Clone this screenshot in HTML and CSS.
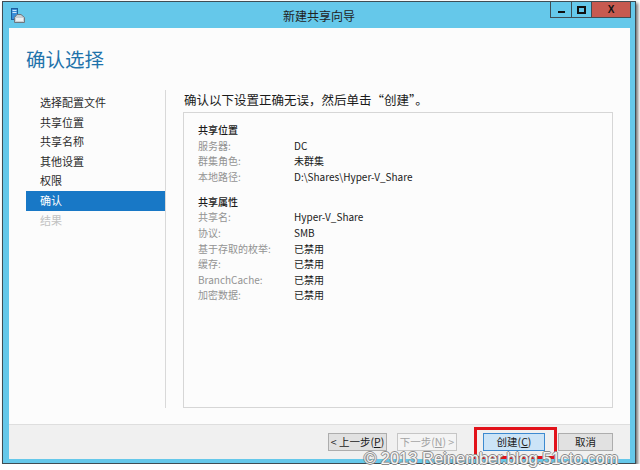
FILE: index.html
```html
<!DOCTYPE html>
<html lang="zh-CN">
<head>
    <meta charset="UTF-8">
    <title>新建共享向导</title>
    <link rel="stylesheet" href="styles.css">
</head>
<body>
    <div class="window">
        <div class="titlebar">
            <svg class="app-icon" width="14" height="15" viewBox="0 0 14 15">
                <rect x="0.5" y="0.5" width="6" height="11" fill="#3a8fd8" stroke="#1f5f9c"/>
                <rect x="1.5" y="2" width="4" height="1" fill="#cfe8ff"/>
                <rect x="1.5" y="4" width="4" height="1" fill="#cfe8ff"/>
                <path d="M3.5 9.5 L6 6.5 H10 L13.5 9.5 V14.5 H3.5 Z" fill="#c9cfd4" stroke="#6d7880"/>
                <rect x="5" y="10" width="7" height="3" fill="#eef1f3"/>
            </svg>
            <div class="title">新建共享向导</div>
            <div class="caption-buttons">
                <span class="cap-btn cap-min"><i></i></span>
                <span class="cap-btn cap-max"><i></i></span>
                <span class="cap-btn cap-close">X</span>
            </div>
        </div>
        <div class="client">
            <div class="main">
                <h1 class="page-title">确认选择</h1>
                <div class="wizard-body">
                    <ul class="steps">
                        <li>选择配置文件</li>
                        <li>共享位置</li>
                        <li>共享名称</li>
                        <li>其他设置</li>
                        <li>权限</li>
                        <li class="active">确认</li>
                        <li class="disabled">结果</li>
                    </ul>
                    <div class="content">
                        <div class="prompt">确认以下设置正确无误，然后单击“创建”。</div>
                        <div class="summary">
                            <div class="group">
                                <div class="group-title">共享位置</div>
                                <div class="row"><span class="label">服务器:</span><span class="value">DC</span></div>
                                <div class="row"><span class="label">群集角色:</span><span class="value">未群集</span></div>
                                <div class="row"><span class="label">本地路径:</span><span class="value">D:\Shares\Hyper-V_Share</span></div>
                            </div>
                            <div class="group">
                                <div class="group-title">共享属性</div>
                                <div class="row"><span class="label">共享名:</span><span class="value">Hyper-V_Share</span></div>
                                <div class="row"><span class="label">协议:</span><span class="value">SMB</span></div>
                                <div class="row"><span class="label">基于存取的枚举:</span><span class="value">已禁用</span></div>
                                <div class="row"><span class="label">缓存:</span><span class="value">已禁用</span></div>
                                <div class="row"><span class="label">BranchCache:</span><span class="value">已禁用</span></div>
                                <div class="row"><span class="label">加密数据:</span><span class="value">已禁用</span></div>
                            </div>
                        </div>
                    </div>
                </div>
            </div>
            <div class="footer">
                <button class="btn btn-prev">&lt; 上一步(<u>P</u>)</button>
                <button class="btn btn-next" disabled>下一步(<u>N</u>) &gt;</button>
                <button class="btn btn-create">创建(<u>C</u>)</button>
                <button class="btn btn-cancel">取消</button>
            </div>
        </div>
    </div>

    <div class="mark-box"></div>
    <div class="watermark">© 2013 Reinember.blog.51cto.com</div>
</body>
</html>
```

FILE: styles.css
```css
body {
    margin: 0;
    padding: 1px 0 0 2px;
    background: #ffffff;
    font-family: "Noto Sans CJK SC", "Noto Sans", sans-serif;
    color: #1e1e1e;
}
.window {
    width: 632px;
    height: 461px;
    border: 1px solid #3f4d54;
    background: #65c8ea;
    box-shadow: 2px 2px 3px rgba(0, 0, 0, 0.55);
    display: flex;
    flex-direction: column;
}
.titlebar {
    height: 26px;
    display: grid;
    grid-template-columns: 1fr auto 1fr;
    align-items: start;
}
.app-icon {
    margin: 6px 0 0 8px;
}
.title {
    font-size: 12px;
    line-height: 14px;
    margin-top: 7px;
    color: #222;
}
.caption-buttons {
    justify-self: end;
    display: flex;
    margin-right: 4px;
}
.cap-btn {
    height: 16px;
    border: 1px solid #3f4d54;
    border-top: none;
    display: flex;
    align-items: center;
    justify-content: center;
    box-sizing: border-box;
    margin-left: -1px;
}
.cap-min { width: 22px; }
.cap-min i {
    display: block;
    width: 7px;
    height: 2px;
    background: #111;
    margin-top: 5px;
}
.cap-max { width: 21px; }
.cap-max i {
    display: block;
    width: 5px;
    height: 4px;
    border: 2px solid #111;
}
.cap-close {
    width: 40px;
    background: #c75a50;
    font-family: "Liberation Sans", Arial, sans-serif;
    font-weight: bold;
    font-size: 10px;
    color: #111;
}
.client {
    margin: 0 5px 3px 6px;
    height: 431px;
    background: #fcfcfc;
    display: flex;
    flex-direction: column;
}
.main {
    flex: 1;
    padding: 19px 0 16px;
    display: flex;
    flex-direction: column;
}
.page-title {
    margin: 0 0 0 17px;
    font-size: 19.5px;
    line-height: 24px;
    font-weight: normal;
    color: #1f73ab;
}
.wizard-body {
    flex: 1;
    margin-top: 19px;
    display: flex;
}
.steps {
    list-style: none;
    margin: 0 0 0 17px;
    padding: 3px 0 0;
    width: 139px;
    border-right: 1px solid #d9d9d9;
}
.steps li {
    height: 19.6px;
    line-height: 19.6px;
    padding-left: 14px;
    font-size: 11px;
    color: #2a2a2a;
}
.steps li.active {
    background: #1878c6;
    color: #ffffff;
}
.steps li.disabled {
    color: #c2c2c2;
}
.content {
    flex: 1;
    margin: 0 17px 0 17px;
    display: flex;
    flex-direction: column;
}
.prompt {
    font-size: 12.5px;
    line-height: 20px;
    padding-left: 1px;
    margin-bottom: 2px;
    color: #1a1a1a;
}
.summary {
    flex: 1;
    border: 1px solid #d6d6d6;
    padding: 9px 0 0 14px;
}
.group + .group {
    margin-top: 9.5px;
}
.group-title,
.row {
    height: 15.6px;
    line-height: 15.6px;
    font-size: 10px;
}
.group-title {
    color: #1a1a1a;
    font-weight: 500;
}
.row {
    display: flex;
}
.label {
    width: 96px;
    color: #939393;
}
.value {
    color: #1a1a1a;
}
.footer {
    height: 34px;
    border-top: 1px solid #dedede;
    background: #f0f0f0;
    display: flex;
    align-items: center;
    justify-content: flex-end;
    padding-right: 17px;
}
.btn {
    height: 18px;
    padding: 0;
    font-family: "Noto Sans CJK SC", "Noto Sans", sans-serif;
    font-size: 10.5px;
    line-height: 16px;
    color: #1a1a1a;
    background: #e1e1e1;
    border: 1px solid #adadad;
}
.btn-prev { width: 59px; }
.btn-next {
    width: 60px;
    margin-left: 10px;
    color: #a3a3a3;
    background: #f4f4f4;
    border-color: #c6c6c6;
}
.btn-create {
    width: 62px;
    margin-left: 26px;
    background: #cce4f7;
    border-color: #3d8ad0;
}
.btn-cancel {
    width: 55px;
    margin-left: 13px;
}
.mark-box {
    position: absolute;
    left: 474px;
    top: 427px;
    width: 77px;
    height: 26px;
    border: 3px solid #e2121a;
}
.watermark {
    position: absolute;
    left: 364px;
    top: 449px;
    font-family: "Liberation Sans", Arial, sans-serif;
    font-size: 16.5px;
    line-height: 19px;
    color: #f6f6f6;
    text-shadow: 1px 0 0 #8c8c8c, -1px 0 0 #8c8c8c, 0 1px 0 #8c8c8c, 0 -1px 0 #8c8c8c;
    white-space: nowrap;
}
```
